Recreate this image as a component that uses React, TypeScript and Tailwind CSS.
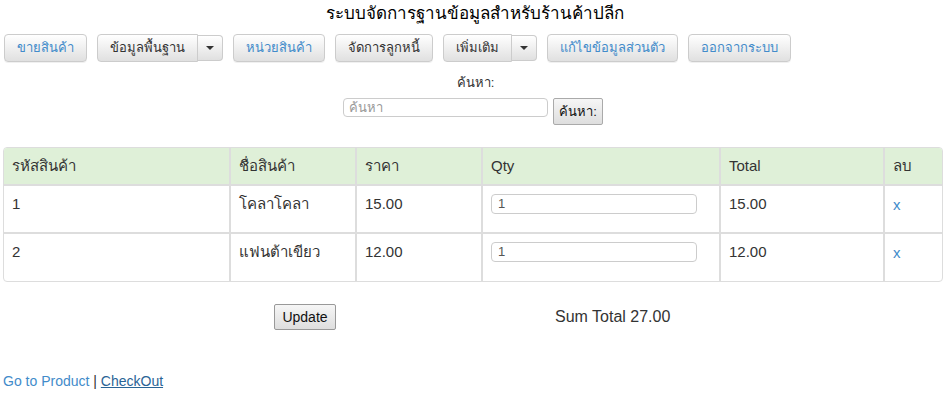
import { ChevronDown } from 'lucide-react';

const font = { fontFamily: 'Tahoma, "Liberation Sans", "DejaVu Sans", sans-serif' };

const Btn = ({ label, blue = true }: { label: string; blue?: boolean }) => (
  <button
    className={`h-[28px] px-[12px] text-[13px] border border-[#ccc] rounded-[4px] bg-gradient-to-b from-white to-[#e0e0e0] shadow-[0_1px_0_rgba(0,0,0,0.06)] ${
      blue ? 'text-[#428bca]' : 'text-[#333]'
    }`}
  >
    {label}
  </button>
);

const SplitBtn = ({ label }: { label: string }) => (
  <div className="flex">
    <button className="h-[28px] px-[12px] text-[13px] text-[#333] border border-[#ccc] rounded-l-[4px] bg-gradient-to-b from-white to-[#e0e0e0]">
      {label}
    </button>
    <button className="h-[26px] mt-[1px] w-[25px] flex items-center justify-center border border-l-0 border-[#ccc] rounded-r-[4px] bg-gradient-to-b from-white to-[#e0e0e0]">
      <span className="w-0 h-0 border-l-[4px] border-r-[4px] border-t-[4px] border-l-transparent border-r-transparent border-t-[#333]" />
    </button>
  </div>
);

const rows = [
  { id: '1', name: 'โคลาโคลา', price: '15.00', qty: '1', total: '15.00' },
  { id: '2', name: 'แฟนต้าเขียว', price: '12.00', qty: '1', total: '12.00' },
];

export default function App() {
  void ChevronDown;
  return (
    <div className="w-[949px] h-[398px] bg-white text-[#333] overflow-hidden" style={{ fontFamily: '"Liberation Sans", Arial, sans-serif' }}>
      <h1 className="text-center text-[17px] text-black pt-[3px] h-[34px] leading-[22px]" style={font}>
        ระบบจัดการฐานข้อมูลสำหรับร้านค้าปลีก
      </h1>

      <div className="flex gap-[10px] pl-[4px]" style={font}>
        <Btn label="ขายสินค้า" />
        <SplitBtn label="ข้อมูลพื้นฐาน" />
        <Btn label="หน่วยสินค้า" />
        <Btn label="จัดการลูกหนี้" blue={false} />
        <SplitBtn label="เพิ่มเติม" />
        <Btn label="แก้ไขข้อมูลส่วนตัว" />
        <Btn label="ออกจากระบบ" />
      </div>

      <div className="flex flex-col items-center mt-[12px]" style={font}>
        <div className="text-[13px] leading-[18px] text-[#333] ml-[2px]">ค้นหา:</div>
        <div className="flex items-start gap-[5px] mt-[6px] ml-[-3px]">
          <input
            placeholder="ค้นหา"
            className="w-[205px] h-[19px] border border-[#ccc] rounded-[4px] px-[5px] text-[13px] placeholder:text-[#999] outline-none"
            style={font}
          />
          <button className="h-[27px] px-[5px] text-[13px] font-normal text-[#111] border border-[#aaa] rounded-[2px] bg-gradient-to-b from-[#f6f6f6] to-[#dedede]">
            ค้นหา:
          </button>
        </div>
      </div>

      <div className="mx-[3px] mt-[22px] border border-[#ddd] rounded-[4px] overflow-hidden w-[940px]">
        <table className="w-full border-collapse text-[15px] text-[#333]">
          <colgroup>
            <col className="w-[226px]" />
            <col className="w-[126px]" />
            <col className="w-[126px]" />
            <col className="w-[238px]" />
            <col className="w-[164px]" />
            <col />
          </colgroup>
          <thead>
            <tr className="bg-[#dff0d8] h-[37px]">
              {['รหัสสินค้า', 'ชื่อสินค้า', 'ราคา', 'Qty', 'Total', 'ลบ'].map((h, i) => (
                <th
                  key={h}
                  className={`text-left font-normal px-[8px] border-b-2 border-[#ddd] ${i > 0 ? 'border-l-2' : ''}`}
                  style={i === 3 || i === 4 ? undefined : font}
                >
                  {h}
                </th>
              ))}
            </tr>
          </thead>
          <tbody>
            {rows.map((r, idx) => (
              <tr key={r.id} className={`h-[48px] ${idx === 0 ? 'border-b-2 border-[#ddd]' : ''}`}>
                <td className="px-[8px] align-top pt-[7px]">{r.id}</td>
                <td className="px-[8px] align-top pt-[7px] border-l-2 border-[#ddd]" style={font}>
                  {r.name}
                </td>
                <td className="px-[8px] align-top pt-[7px] border-l-2 border-[#ddd]">{r.price}</td>
                <td className="px-[8px] align-top pt-[6px] border-l-2 border-[#ddd]">
                  <input
                    defaultValue={r.qty}
                    className="w-[206px] h-[20px] border border-[#ccc] rounded-[4px] px-[6px] text-[13px] text-[#555] outline-none"
                  />
                </td>
                <td className="px-[8px] align-top pt-[7px] border-l-2 border-[#ddd]">{r.total}</td>
                <td className="px-[8px] align-top pt-[8px] border-l-2 border-[#ddd] text-[#428bca]">x</td>
              </tr>
            ))}
          </tbody>
        </table>
      </div>

      <div className="flex items-center mt-[22px] h-[26px]">
        <button className="ml-[274px] h-[26px] w-[62px] text-[14px] font-normal text-[#111] border border-[#999] rounded-[2px] bg-gradient-to-b from-[#f6f6f6] to-[#dedede]">
          Update
        </button>
        <div className="ml-[219px] text-[16px] text-[#333]">Sum Total 27.00</div>
      </div>

      <div className="mt-[41px] pl-[3px] text-[14px] text-[#428bca]">
        Go to Product <span className="text-[#333]">|</span>{' '}
        <span className="underline text-[#2a6496]">CheckOut</span>
      </div>
    </div>
  );
}
